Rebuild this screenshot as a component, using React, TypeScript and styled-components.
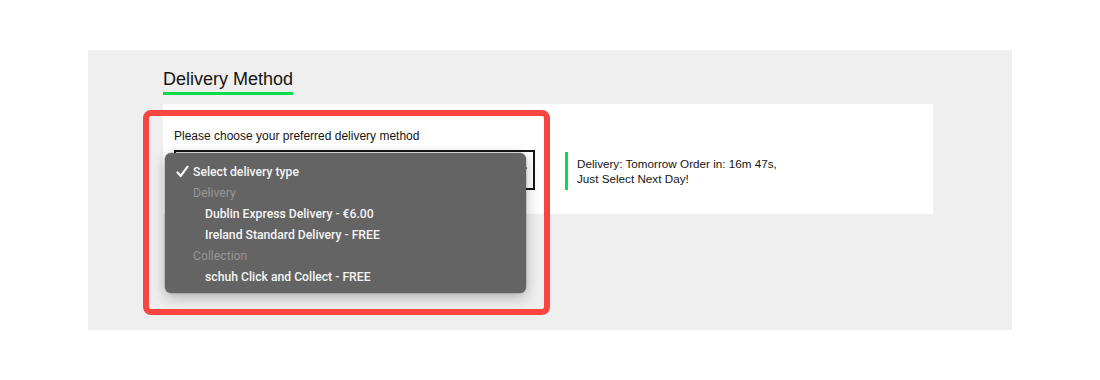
import React from 'react';
import styled, { createGlobalStyle } from 'styled-components';

const GlobalStyle = createGlobalStyle`
  html, body {
    margin: 0;
    padding: 0;
    background: #ffffff;
  }
  body {
    font-family: 'Liberation Sans', Arial, sans-serif;
    color: #111;
  }
`;

const Page = styled.div`
  padding: 50px 88px 0;
  width: 1100px;
  box-sizing: border-box;
`;

const Panel = styled.section`
  background: #efefef;
  height: 280px;
  padding: 18px 79px 0 75px;
  box-sizing: border-box;
  display: flex;
  flex-direction: column;
  align-items: flex-start;
  gap: 9px;
`;

const Heading = styled.h2`
  margin: 0;
  font-family: 'Liberation Sans', Arial, sans-serif;
  font-size: 18px;
  line-height: 23px;
  font-weight: 400;
  color: #141414;
  padding-bottom: 1px;
  border-bottom: 3px solid #0cdc4c;
`;

const Card = styled.div`
  position: relative;
  align-self: stretch;
  background: #fff;
  height: 110px;
  padding: 24px 12px 0 11px;
  box-sizing: border-box;
  display: flex;
  align-items: flex-start;
  gap: 30px;
`;

const Field = styled.div`
  display: flex;
  flex-direction: column;
  gap: 6px;
`;

const Label = styled.label`
  font-size: 12px;
  line-height: 16px;
  color: #151515;
`;

const SelectBox = styled.div`
  position: relative;
  width: 361px;
  height: 40px;
  border: 2px solid #151515;
  box-sizing: border-box;
  background: #fff;
  display: flex;
  justify-content: flex-end;
  align-items: center;
  padding-right: 7px;
`;

const Chevron = styled.span`
  width: 5px;
  height: 5px;
  margin-top: -4px;
  border-right: 1.5px solid #444;
  border-bottom: 1.5px solid #444;
  transform: rotate(45deg);
`;

const Menu = styled.ul`
  position: absolute;
  left: -11px;
  top: 1px;
  width: 361px;
  margin: 0;
  padding: 8px 0 6px;
  list-style: none;
  background: #646464;
  border-radius: 6px;
  box-shadow: 0 0 0 0.5px rgba(0, 0, 0, 0.25), 0 4px 14px rgba(0, 0, 0, 0.28);
  font-family: Roboto, 'Liberation Sans', Arial, sans-serif;
  font-size: 12.2px;
  z-index: 2;
`;

const MenuRow = styled.li<{ $indent: number; $muted?: boolean }>`
  display: flex;
  align-items: center;
  height: 21px;
  padding-left: ${(p) => p.$indent}px;
  color: ${(p) => (p.$muted ? '#959595' : '#f4f4f4')};
  font-weight: ${(p) => (p.$muted ? 400 : 500)};
  white-space: nowrap;
`;

const TickSlot = styled.span`
  width: 17px;
  margin-left: -17px;
  display: flex;
  align-items: center;
`;

const Notice = styled.div`
  margin-top: 24px;
  border-left: 3px solid #0cdc4c;
  padding: 4px 0 4px 9px;
  font-size: 11.7px;
  line-height: 15px;
  color: #151515;
`;

const Highlight = styled.div`
  position: absolute;
  left: -20px;
  top: 6px;
  width: 407px;
  height: 205px;
  box-sizing: border-box;
  border: 6px solid #f6463f;
  border-radius: 8px;
  z-index: 3;
  pointer-events: none;
`;

const options = [
  { label: 'Select delivery type', indent: 28, checked: true },
  { label: 'Delivery', indent: 28, muted: true },
  { label: 'Dublin Express Delivery - €6.00', indent: 40 },
  { label: 'Ireland Standard Delivery - FREE', indent: 40 },
  { label: 'Collection', indent: 28, muted: true },
  { label: 'schuh Click and Collect - FREE', indent: 40 },
];

export default function App() {
  return (
    <>
      <GlobalStyle />
      <Page>
        <Panel>
          <Heading>Delivery Method</Heading>
          <Card>
            <Field>
              <Label>Please choose your preferred delivery method</Label>
              <SelectBox>
                <Chevron />
                <Menu>
                  {options.map((o) => (
                    <MenuRow key={o.label} $indent={o.indent} $muted={o.muted}>
                      {o.checked && (
                        <TickSlot>
                          <svg width="13" height="13" viewBox="0 0 13 13">
                            <path
                              d="M1.5 7.4 L4.6 11 L11.6 1.6"
                              fill="none"
                              stroke="#f4f4f4"
                              strokeWidth="2.2"
                              strokeLinecap="round"
                              strokeLinejoin="round"
                            />
                          </svg>
                        </TickSlot>
                      )}
                      {o.label}
                    </MenuRow>
                  ))}
                </Menu>
              </SelectBox>
            </Field>
            <Notice>
              Delivery: Tomorrow Order in: 16m 47s,
              <br />
              Just Select Next Day!
            </Notice>
            <Highlight />
          </Card>
        </Panel>
      </Page>
    </>
  );
}
